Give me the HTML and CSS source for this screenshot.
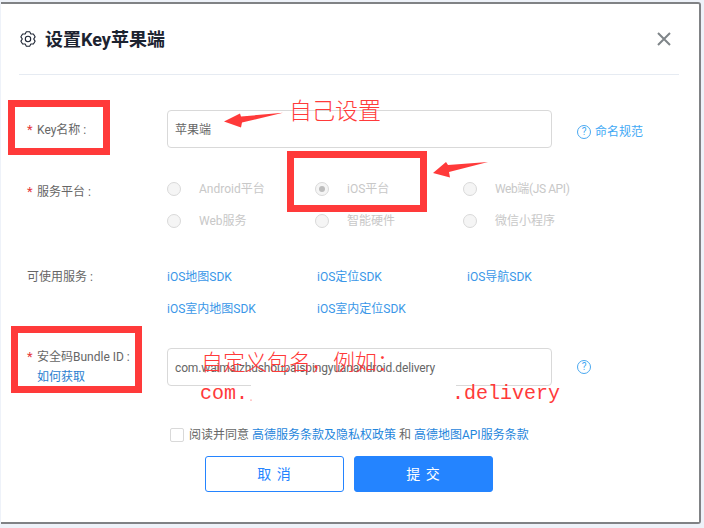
FILE: index.html
```html
<!DOCTYPE html>
<html lang="zh-CN">
<head>
<meta charset="utf-8">
<title>设置Key苹果端</title>
<link rel="stylesheet" href="styles.css">
</head>
<body>
<main class="dialog">
  <header class="head">
    <svg class="gear" viewBox="0 0 16 16" width="16" height="16" aria-hidden="true">
      <path d="M6.340.790H9.660L10.850 3.060 13.410 2.950 15.080 5.840 13.700 8 15.080 10.160 13.410 13.050 10.850 12.940 9.660 15.210H6.340L5.150 12.940 2.590 13.050 .920 10.160 2.300 8 .920 5.840 2.590 2.950 5.150 3.060Z"/>
      <circle cx="8" cy="8" r="2.700"/>
    </svg>
    <h1 class="title">设置Key苹果端</h1>
    <svg class="close" viewBox="0 0 14 14" width="14" height="14" aria-hidden="true">
      <path d="M1 1l12 12M13 1L1 13"/>
    </svg>
  </header>

  <form class="form">
    <div class="row row-input">
      <label class="label"><span class="star">*</span>Key名称 :</label>
      <div class="field">苹果端</div>
      <a class="help"><span class="qmark">?</span>命名规范</a>
    </div>

    <div class="row row-radios">
      <label class="label label-low"><span class="star">*</span>服务平台 :</label>
      <div class="options">
        <span class="opt"><i class="radio"></i>Android平台</span>
        <span class="opt"><i class="radio radio-on"></i>iOS平台</span>
        <span class="opt opt-tight"><i class="radio"></i>Web端(JS API)</span>
        <span class="opt"><i class="radio"></i>Web服务</span>
        <span class="opt"><i class="radio"></i>智能硬件</span>
        <span class="opt"><i class="radio"></i>微信小程序</span>
      </div>
    </div>

    <div class="row row-services">
      <label class="label label-plain">可使用服务 :</label>
      <div class="services">
        <a>iOS地图SDK</a>
        <a>iOS定位SDK</a>
        <a>iOS导航SDK</a>
        <a>iOS室内地图SDK</a>
        <a>iOS室内定位SDK</a>
      </div>
    </div>

    <div class="row row-input row-bundle">
      <label class="label label-stack">
        <span><span class="star">*</span>安全码Bundle ID :</span>
        <a class="how">如何获取</a>
      </label>
      <div class="field field-tight">com.waimaizhushoupaispingyuanandroid.delivery</div>
      <a class="help"><span class="qmark">?</span></a>
    </div>

    <div class="agree">
      <i class="check"></i>
      <span>阅读并同意 <a>高德服务条款及隐私权政策</a> 和 <a>高德地图API服务条款</a></span>
    </div>

    <div class="actions">
      <button type="button" class="btn btn-ghost">取 消</button>
      <button type="button" class="btn btn-primary">提 交</button>
    </div>
  </form>
</main>

<div class="marks">
  <div class="box box-key"></div>
  <div class="box box-ios"></div>
  <div class="box box-bundle"></div>
  <div class="erase"></div>
  <svg class="arrows" viewBox="0 0 704 528" width="704" height="528" aria-hidden="true">
    <path d="M224 121.500L240 113.500 241 116.500 283 112.800 242 122.500 241 127.500z"/>
    <path d="M433 173L446 162 448 165 488 162 449 172 450 177.500z"/>
    <circle cx="251" cy="400" r=".6"/>
  </svg>
  <span class="note note-self">自己设置</span>
  <span class="note note-pkg">自定义包名&#xFF0C;例如&#xFF1A;</span>
  <span class="note-mono note-com">com.</span>
  <span class="note-mono note-del">.delivery</span>
</div>
</body>
</html>
```

FILE: styles.css
```css
* { box-sizing: border-box; }

html, body { margin: 0; padding: 0; }

body {
  position: relative;
  width: 704px;
  height: 528px;
  overflow: hidden;
  background: #eef2f9;
  font-family: Roboto, "Noto Sans CJK SC", sans-serif;
  font-size: 12px;
  line-height: 20px;
  color: #666;
}

a { color: #3a97e8; text-decoration: none; }
i { font-style: normal; }

.dialog {
  width: 700px;
  height: 522px;
  margin: 2px 0 0 1px;
  padding: 0 20px 0 18px;
  background: #fff;
  border-top: 2px solid #808285;
  border-right: 2px solid #808285;
  border-bottom: 2px solid #808285;
  border-top-right-radius: 3px;
  border-bottom-right-radius: 3px;
}

.head {
  display: flex;
  align-items: center;
  height: 71px;
  padding: 0 8px 0 1px;
  border-bottom: 1px solid #e6ebf2;
}

.gear { flex: none; margin-bottom: 1px; fill: none; stroke: #1d2433; stroke-width: 1.100; stroke-linejoin: round; }

.title {
  flex: 1;
  margin: 2px 0 0 9px;
  font-size: 18px;
  line-height: 24px;
  font-weight: 700;
  color: #1c2330;
}

.close { flex: none; fill: none; stroke: #7f8589; stroke-width: 2; }

.form { padding: 35px 0 0 8px; }

.row { display: flex; align-items: flex-start; }

.row-input { height: 38px; }

.label { flex: none; width: 140px; }

.row-input > .label { padding-top: 10px; }
.row-input > .label-stack { padding-top: 0; margin-top: -1px; display: flex; flex-direction: column; }

.label-low { padding-top: 9px; }
.label-plain { padding-top: 6px; }

.star { display: inline-block; width: 10px; color: #e5383b; font-size: 13px; }

.how { padding-left: 10px; color: #2b80cf; }

.field {
  flex: none;
  width: 385px;
  height: 38px;
  padding: 0 7px;
  line-height: 38px;
  border: 1px solid #d9d9d9;
  border-radius: 4px;
  color: #666;
  background: #fff;
}

.field-tight { letter-spacing: -.13px; }

.help {
  display: flex;
  align-items: center;
  gap: 4px;
  height: 38px;
  margin: 3px 0 0 25px;
  color: #3fa9f5;
}

.row-bundle .help { margin-top: 0; }

.qmark {
  flex: none;
  width: 14px;
  height: 14px;
  border: 1px solid #4aa8f0;
  border-radius: 50%;
  font-size: 10px;
  line-height: 12px;
  text-align: center;
}

.row-radios { margin-top: 25px; }

.options {
  display: grid;
  grid-template-columns: repeat(3, 148px);
  grid-auto-rows: 32px;
  color: #c8c8c8;
}

.opt { display: flex; align-items: center; gap: 18px; }
.opt-tight { letter-spacing: -.4px; }

.radio {
  flex: none;
  width: 14px;
  height: 14px;
  border: 1px solid #d9d9d9;
  border-radius: 50%;
  background: #f5f5f5;
  display: flex;
  align-items: center;
  justify-content: center;
}

.radio-on::after {
  content: "";
  width: 6px;
  height: 6px;
  border-radius: 50%;
  background: #bdbdbd;
}

.row-services { margin-top: 24px; }

.services {
  display: grid;
  grid-template-columns: repeat(3, 150px);
  grid-auto-rows: 32px;
  align-items: center;
}

.row-bundle { margin-top: 23px; }

.agree {
  display: flex;
  align-items: center;
  gap: 5px;
  height: 20px;
  margin: 39px 0 0 143px;
}

.agree a { color: #1f86dc; }

.check {
  flex: none;
  width: 14px;
  height: 14px;
  border: 1px solid #d9d9d9;
  border-radius: 2px;
  background: #fff;
}

.actions {
  display: flex;
  gap: 10px;
  margin: 11px 0 0 178px;
}

.btn {
  width: 139px;
  height: 36px;
  padding: 0;
  border-radius: 3px;
  font: inherit;
  font-size: 14px;
  letter-spacing: 1px;
}

.btn-ghost { background: #fff; border: 1px solid #2484ff; color: #2484ff; }
.btn-primary { background: #2484ff; border: 1px solid #2484ff; color: #fff; }

/* Hand-drawn screenshot annotations lying over the form */
.marks { position: absolute; inset: 0; }

.box { position: absolute; border: 7px solid #ff3a3a; }
.box-key { left: 8px; top: 100px; width: 102px; height: 55px; }
.box-ios { left: 287px; top: 151px; width: 140px; height: 61px; }
.box-bundle { left: 11px; top: 326px; width: 131px; height: 67px; }

.erase { position: absolute; left: 251px; top: 384px; width: 205px; height: 20px; background: #fff; }

.arrows { position: absolute; left: 0; top: 0; fill: #ff3a3a; }

.note {
  position: absolute;
  color: #ff3a3a;
  font-family: "Noto Sans CJK SC", sans-serif;
  font-weight: 300;
  white-space: nowrap;
}

.note-self { left: 289px; top: 94px; font-size: 23px; line-height: 30px; }
.note-pkg { left: 201px; top: 345px; font-size: 22px; line-height: 30px; }

.note-mono {
  position: absolute;
  top: 382px;
  color: #ff3a3a;
  font-family: "Liberation Mono", monospace;
  font-size: 20px;
  line-height: 24px;
  white-space: nowrap;
}

.note-com { left: 200px; }
.note-del { left: 452px; }
```
